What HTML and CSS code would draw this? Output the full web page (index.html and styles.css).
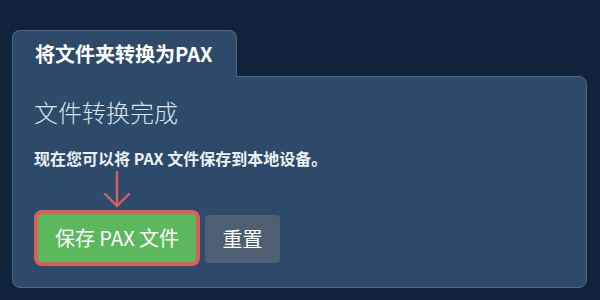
FILE: index.html
```html
<!DOCTYPE html>
<html lang="zh-CN">
<head>
<meta charset="utf-8">
<link rel="stylesheet" href="styles.css">
</head>
<body>
<div class="card">
  <div class="tab">将文件夹转换为PAX</div>
  <div class="panel">
    <h2 class="title">文件转换完成</h2>
    <p class="desc">现在您可以将 PAX 文件保存到本地设备。</p>
    <div class="actions">
      <div class="save-wrap">
        <svg class="arrow" width="30" height="38" viewBox="0 0 30 38">
          <path d="M15 1 V35 M3 23 L15 35 L27 23" fill="none" stroke="#d9605a" stroke-width="2.4" stroke-linecap="round" stroke-linejoin="round"/>
        </svg>
        <button class="btn btn-save">保存 PAX 文件</button>
      </div>
      <button class="btn btn-reset">重置</button>
    </div>
  </div>
</div>
</body>
</html>
```

FILE: styles.css
```css
html, body {
  margin: 0;
  padding: 0;
  background: #11233a;
  font-family: "Noto Sans CJK SC", "Noto Sans", sans-serif;
}
.card {
  margin: 30px 0 0 12px;
  width: 575px;
}
.tab {
  display: inline-block;
  position: relative;
  z-index: 1;
  margin-bottom: -1px;
  width: 180px;
  padding: 11px 21px 11px 22px;
  line-height: 24px;
  font-size: 20px;
  font-weight: 700;
  color: #ffffff;
  background: #2d4a6b;
  border: 1px solid #4f6886;
  border-bottom: none;
  border-radius: 8px 8px 0 0;
}
.panel {
  background: #2d4a6b;
  border: 1px solid #4f6886;
  border-radius: 0 8px 8px 8px;
  padding: 19px 21px 24px 21px;
  height: 167px;
}
.title {
  margin: 0;
  font-size: 24px;
  line-height: 32px;
  font-weight: 300;
  color: #dce3ea;
}
.desc {
  margin: 19px 0 0 0;
  font-size: 16px;
  line-height: 22px;
  font-weight: 700;
  color: #eef1f4;
}
.actions {
  display: flex;
  gap: 9px;
  margin-top: 45px;
  margin-left: 4px;
}
.save-wrap {
  position: relative;
}
.arrow {
  position: absolute;
  left: 50%;
  margin-left: -15px;
  top: -43px;
}
.btn {
  font-family: inherit;
  font-size: 20px;
  line-height: 24px;
  padding: 12px 17px;
  border: none;
  border-radius: 4px;
  color: #ffffff;
  cursor: pointer;
}
.btn-save {
  background: #5cb85c;
  box-shadow: 0 0 0 4px #d9605a;
  width: 158px;
  padding: 12px 0;
}
.btn-reset {
  background: #4e5f72;
  width: 75px;
  padding: 12px 0;
  margin-top: 1px;
}
```
